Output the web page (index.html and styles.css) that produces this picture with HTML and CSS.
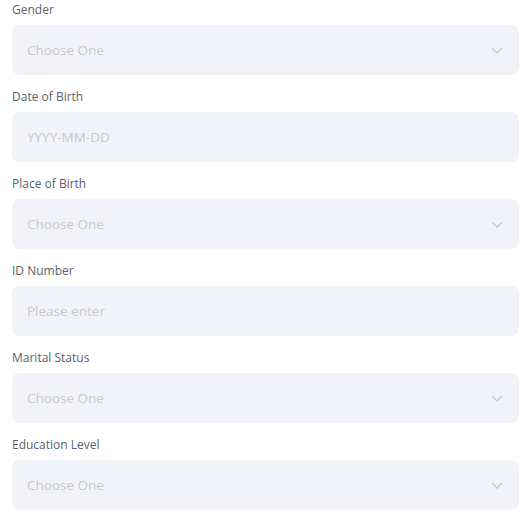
FILE: index.html
```html
<!DOCTYPE html>
<html lang="en">
<head>
    <meta charset="UTF-8">
    <meta name="viewport" content="width=device-width, initial-scale=1.0">
    <title>Personal Information</title>
    <link rel="stylesheet" href="styles.css">
</head>
<body>
    <form class="info-form">
        <div class="field">
            <label>Gender</label>
            <div class="input-box select">
                <span class="placeholder">Choose One</span>
                <svg class="chevron" width="12" height="7" viewBox="0 0 12 7"><path d="M1 1l5 5 5-5" fill="none" stroke="#c3c5cc" stroke-width="1.3"/></svg>
            </div>
        </div>
        <div class="field">
            <label>Date of Birth</label>
            <div class="input-box">
                <span class="placeholder">YYYY-MM-DD</span>
            </div>
        </div>
        <div class="field">
            <label>Place of Birth</label>
            <div class="input-box select">
                <span class="placeholder">Choose One</span>
                <svg class="chevron" width="12" height="7" viewBox="0 0 12 7"><path d="M1 1l5 5 5-5" fill="none" stroke="#c3c5cc" stroke-width="1.3"/></svg>
            </div>
        </div>
        <div class="field">
            <label>ID Number</label>
            <div class="input-box">
                <span class="placeholder">Please enter</span>
            </div>
        </div>
        <div class="field">
            <label>Marital Status</label>
            <div class="input-box select">
                <span class="placeholder">Choose One</span>
                <svg class="chevron" width="12" height="7" viewBox="0 0 12 7"><path d="M1 1l5 5 5-5" fill="none" stroke="#c3c5cc" stroke-width="1.3"/></svg>
            </div>
        </div>
        <div class="field">
            <label>Education Level</label>
            <div class="input-box select">
                <span class="placeholder">Choose One</span>
                <svg class="chevron" width="12" height="7" viewBox="0 0 12 7"><path d="M1 1l5 5 5-5" fill="none" stroke="#c3c5cc" stroke-width="1.3"/></svg>
            </div>
        </div>
    </form>
</body>
</html>
```

FILE: styles.css
```css
body {
    font-family: "Open Sans", Arial, sans-serif;
    background-color: #ffffff;
    margin: 0;
    padding: 0;
}

.info-form {
    display: flex;
    flex-direction: column;
    gap: 12px;
    padding: 0 1px 0 12px;
}

.field label {
    display: block;
    font-size: 12px;
    line-height: 19px;
    color: #5b5f69;
    margin-bottom: 6px;
}

.input-box {
    height: 50px;
    background-color: #f2f3f8;
    border-radius: 8px;
    display: flex;
    align-items: center;
    justify-content: space-between;
    padding: 0 16px 0 15px;
}

.placeholder {
    font-size: 13.5px;
    color: #c6c8ce;
}

.chevron {
    display: block;
}
```
